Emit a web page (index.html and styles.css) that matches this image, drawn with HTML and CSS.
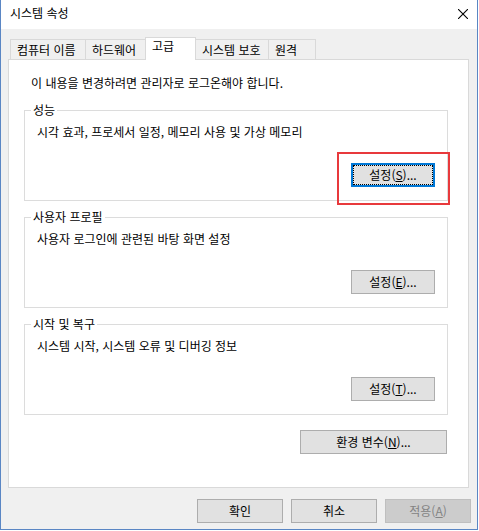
FILE: index.html
```html
<!DOCTYPE html>
<html lang="ko">
<head>
<meta charset="utf-8">
<title>시스템 속성</title>
<link rel="stylesheet" href="styles.css">
</head>
<body>
<div class="window">
  <div class="titlebar">
    <span class="title">시스템 속성</span>
    <svg class="close" width="10" height="10" viewBox="0 0 10 10" aria-hidden="true">
      <path d="M0 0 L10 10 M10 0 L0 10" stroke="#000" stroke-width="1.1" fill="none"/>
    </svg>
  </div>
  <div class="client">
    <div class="tabs">
      <div class="tab tab-name">컴퓨터 이름</div>
      <div class="tab tab-hw">하드웨어</div>
      <div class="tab tab-adv selected">고급</div>
      <div class="tab tab-prot">시스템 보호</div>
      <div class="tab tab-remote">원격</div>
    </div>
    <div class="panel">
      <p class="note">이 내용을 변경하려면 관리자로 로그온해야 합니다.</p>
      <fieldset class="group first">
        <legend>성능</legend>
        <p class="desc">시각 효과, 프로세서 일정, 메모리 사용 및 가상 메모리</p>
        <div class="actions">
          <span class="mark-wrap">
            <button class="btn btn-group focused">설정(<u>S</u>)...</button>
            <span class="mark"></span>
          </span>
        </div>
      </fieldset>
      <fieldset class="group">
        <legend>사용자 프로필</legend>
        <p class="desc">사용자 로그인에 관련된 바탕 화면 설정</p>
        <div class="actions">
          <button class="btn btn-group">설정(<u>E</u>)...</button>
        </div>
      </fieldset>
      <fieldset class="group">
        <legend>시작 및 복구</legend>
        <p class="desc">시스템 시작, 시스템 오류 및 디버깅 정보</p>
        <div class="actions">
          <button class="btn btn-group">설정(<u>T</u>)...</button>
        </div>
      </fieldset>
      <div class="env-row">
        <button class="btn btn-env">환경 변수(<u>N</u>)...</button>
      </div>
    </div>
    <div class="footer">
      <button class="btn btn-dlg">확인</button>
      <button class="btn btn-dlg">취소</button>
      <button class="btn btn-dlg disabled" disabled>적용(<u>A</u>)</button>
    </div>
  </div>
</div>
</body>
</html>
```

FILE: styles.css
```css
html {
  background: #ffffff;
}

body {
  margin: 0;
  font-family: "Noto Sans CJK KR", "Noto Sans", sans-serif;
  font-size: 12px;
  line-height: 16px;
  color: #000000;
}

.window {
  width: 478px;
  height: 530px;
  box-sizing: border-box;
  border: 1px solid #5a86c4;
  border-top: none;
  background: #f0f0f0;
  display: flex;
  flex-direction: column;
}

.titlebar {
  height: 29px;
  flex: none;
  background: #ffffff;
  display: flex;
  justify-content: space-between;
  align-items: flex-start;
  padding: 5px 9px 0 9px;
  box-sizing: border-box;
}

.close {
  margin-top: 4px;
  display: block;
}

.client {
  flex: 1;
  display: flex;
  flex-direction: column;
  padding: 0 8px 0 7px;
  min-height: 0;
}

.tabs {
  margin-top: 8px;
  height: 22px;
  display: flex;
  align-items: flex-end;
  padding-left: 2px;
  flex: none;
}

.tab {
  height: 20px;
  box-sizing: border-box;
  border: 1px solid #d9d9d9;
  border-bottom: none;
  background: #f0f0f0;
  padding: 2px 0 0 6px;
  white-space: nowrap;
  margin-left: -1px;
}

.tab:first-child {
  margin-left: 0;
}

.tab-name { width: 76px; }
.tab-hw { width: 61px; }
.tab-adv { width: 51px; }
.tab-prot { width: 74px; }
.tab-remote { width: 48px; }

.tab.selected {
  height: 23px;
  margin-bottom: -1px;
  background: #ffffff;
  padding-top: 0;
  position: relative;
  z-index: 1;
}

.panel {
  flex: 1;
  background: #ffffff;
  border: 1px solid #d9d9d9;
  padding: 15px 20px 0 15px;
  display: flex;
  flex-direction: column;
  min-height: 0;
}

.note {
  margin: 0 0 0 7px;
}

.group {
  margin: 8px 0 0 0;
  padding: 6px 12px 13px 6px;
  border: 1px solid #dcdcdc;
  min-width: 0;
}

.group.first {
  margin-top: 11px;
}

.group legend {
  padding: 0 2px;
  margin: 0;
  line-height: 16px;
}

.desc {
  margin: 0 0 0 6px;
}

.actions {
  margin-top: 23px;
  display: flex;
  justify-content: flex-end;
}

.btn {
  font-family: inherit;
  font-size: 12px;
  line-height: 22px;
  height: 24px;
  box-sizing: border-box;
  border: 1px solid #adadad;
  background: #e1e1e1;
  color: #000000;
  padding: 0;
  margin: 0;
  text-align: center;
  border-radius: 0;
  display: block;
}

.btn u {
  text-decoration: underline;
  text-underline-offset: 1px;
}

.btn-group {
  width: 84px;
}

.btn.focused {
  border: 2px solid #0078d7;
  line-height: 20px;
  outline: 1px dotted #000000;
  outline-offset: -3px;
}

.mark-wrap {
  position: relative;
  display: block;
}

.mark {
  position: absolute;
  top: -11px;
  left: -14px;
  right: -15px;
  bottom: -18px;
  border: 2px solid #e8393c;
  pointer-events: none;
}

.env-row {
  margin-top: 15px;
  display: flex;
  justify-content: flex-end;
  padding-right: 1px;
}

.btn-env {
  width: 147px;
}

.footer {
  flex: none;
  margin: 11px 0 6px 0;
  height: 24px;
  display: flex;
  justify-content: flex-end;
  gap: 8px;
  padding-right: 0;
  margin-right: -2px;
}

.btn-dlg {
  width: 86px;
}

.btn.disabled {
  background: #cccccc;
  border-color: #bfbfbf;
  color: #838383;
}
```
